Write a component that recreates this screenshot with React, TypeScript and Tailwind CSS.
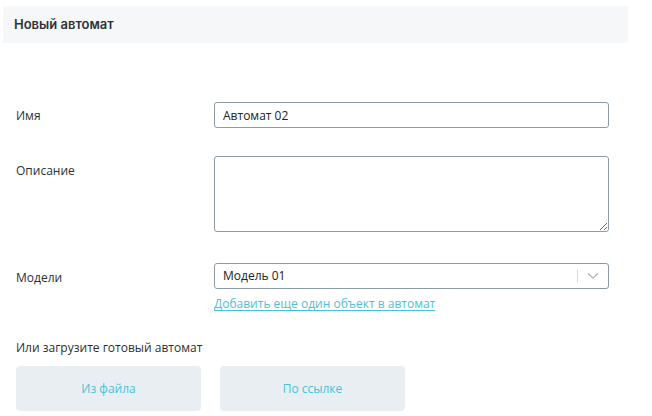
import React, { useState } from 'react';

const App: React.FC = () => {
    const [name, setName] = useState('Автомат 02');
    const [description, setDescription] = useState('');

    return (
        <div className="w-[652px] h-[416px] bg-white text-[#2b2f33] text-[12px] overflow-hidden" style={{ fontFamily: '"Open Sans", "Noto Sans", sans-serif' }}>
            <header className="ml-[3px] mt-[6px] w-[625px] h-[37px] bg-[#f5f7f9] flex items-center pl-[11px]">
                <h1 className="text-[13px] font-semibold text-[#2f3337]" style={{ fontFamily: 'Inter, "Open Sans", sans-serif' }}>Новый автомат</h1>
            </header>

            <main className="pl-[16px] pt-[59px]">
                <div className="flex items-center h-[26px]">
                    <label className="w-[198px] pt-[2px]">Имя</label>
                    <input
                        value={name}
                        onChange={e => setName(e.target.value)}
                        className="w-[395px] h-[26px] border border-[#8c99a6] rounded-[3px] px-[8px] text-[12px] text-[#222] outline-none"
                    />
                </div>

                <div className="flex mt-[28px]">
                    <label className="w-[198px] pt-[6px]">Описание</label>
                    <textarea
                        value={description}
                        onChange={e => setDescription(e.target.value)}
                        className="w-[395px] h-[76px] border border-[#8c99a6] rounded-[3px] px-[8px] py-[4px] outline-none block"
                    />
                </div>

                <div className="flex mt-[31px]">
                    <label className="w-[198px] h-[26px] flex items-center pt-[3px]">Модели</label>
                    <div className="w-[395px]">
                        <div className="h-[26px] border border-[#8c99a6] rounded-[3px] flex items-center pl-[8px] text-[#222]">
                            <span className="flex-1">Модель 01</span>
                            <span className="w-px h-[14px] bg-[#d7dce1]" />
                            <svg className="mx-[9px]" width="12" height="8" viewBox="0 0 12 8" fill="none">
                                <path d="M1 1.5 L6 6 L11 1.5" stroke="#a7b0b9" strokeWidth="1.1" />
                            </svg>
                        </div>
                        <a href="#" className="block mt-[6px] text-[#47c2d8] underline underline-offset-2 leading-[18px]">
                            Добавить еще один объект в автомат
                        </a>
                    </div>
                </div>

                <p className="mt-[26px] leading-[18px]">Или загрузите готовый автомат</p>
                <div className="flex gap-[19px] mt-[9px]">
                    <button className="w-[185px] h-[45px] rounded-[4px] bg-[#e9eef2] text-[#47c2d8] text-[12px]">Из файла</button>
                    <button className="w-[185px] h-[45px] rounded-[4px] bg-[#e9eef2] text-[#47c2d8] text-[12px]">По ссылке</button>
                </div>
            </main>
        </div>
    );
};

export default App;
